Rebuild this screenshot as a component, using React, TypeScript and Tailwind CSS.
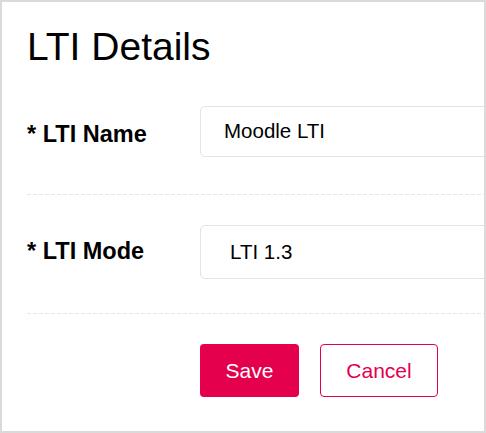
export default function App() {
  return (
    <div className="w-[486px] h-[433px] overflow-hidden border-2 border-[#dadada] bg-white font-['Liberation_Sans',Arial,sans-serif] text-black">
      <div className="pl-[25px] pt-[21px]">
        {/* Header */}
        <h1 className="text-[39px] leading-[48px] font-normal">LTI Details</h1>

        {/* Name */}
        <div className="mt-[35px] flex items-start">
          <label className="w-[173px] shrink-0 mt-[15px] text-[23.5px] leading-[26px] font-bold">
            * LTI Name
          </label>
          <div className="w-[320px] shrink-0 h-[51px] rounded-[5px] border border-[#dde5e8] pl-[23px] flex items-center text-[20.5px]">
            Moodle LTI
          </div>
        </div>

        <div className="mt-[37px] h-px bg-[repeating-linear-gradient(90deg,#e6e6e6_0_4px,transparent_4px_6px)]" />

        {/* Mode */}
        <div className="mt-[30px] flex items-start">
          <label className="w-[173px] shrink-0 mt-[13px] text-[23.5px] leading-[26px] font-bold">
            * LTI Mode
          </label>
          <div className="w-[320px] shrink-0 h-[54px] rounded-[5px] border border-[#dde5e8] pl-[29px] flex items-center text-[20.5px]">
            LTI 1.3
          </div>
        </div>

        <div className="mt-[34px] h-px bg-[repeating-linear-gradient(90deg,#e6e6e6_0_4px,transparent_4px_6px)]" />

        {/* Actions */}
        <div className="mt-[30px] ml-[173px] flex gap-[21px]">
          <button className="w-[99px] h-[53px] rounded-[4px] bg-[#e4004c] text-white text-[21px]">
            Save
          </button>
          <button className="w-[118px] h-[53px] rounded-[4px] border border-[#e4004c] bg-white text-[#e4004c] text-[21px]">
            Cancel
          </button>
        </div>
      </div>
    </div>
  );
}
